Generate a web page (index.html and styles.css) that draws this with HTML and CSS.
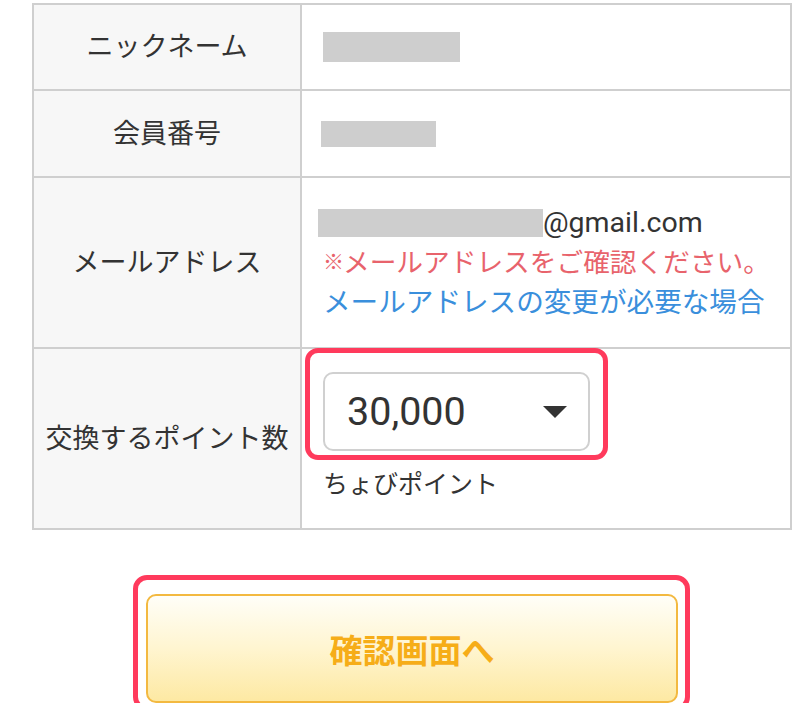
FILE: index.html
```html
<!DOCTYPE html>
<html lang="ja">
<head>
<meta charset="utf-8">
<title>ポイント交換</title>
<link rel="stylesheet" href="styles.css">
</head>
<body>
<div class="page">
  <div class="form-table">
    <div class="label">ニックネーム</div>
    <div class="value"><span class="mask mask-nick"></span></div>

    <div class="label">会員番号</div>
    <div class="value"><span class="mask mask-id"></span></div>

    <div class="label">メールアドレス</div>
    <div class="value value-col">
      <div class="line"><span class="mask mask-mail"></span><span class="latin">@gmail.com</span></div>
      <div class="line note"><span class="note-mark">※</span>メールアドレスをご確認ください。</div>
      <a class="line link" href="#">メールアドレスの変更が必要な場合</a>
    </div>

    <div class="label">交換するポイント数</div>
    <div class="value value-col">
      <div class="select-wrap">
        <div class="select">
          <span class="select-text">30,000</span>
          <svg class="caret" width="24" height="12" viewBox="0 0 24 12"><path d="M0 0H24L12 12Z" fill="#333"/></svg>
        </div>
        <span class="highlight highlight-select"></span>
      </div>
      <div class="line unit">ちょびポイント</div>
    </div>
  </div>

  <div class="actions">
    <div class="btn-wrap">
      <button class="btn" type="button">確認画面へ</button>
      <span class="highlight highlight-btn"></span>
    </div>
  </div>
</div>
</body>
</html>
```
FILE: styles.css
```css
* { box-sizing: border-box; }
html, body {
  margin: 0;
  padding: 0;
  background: #fff;
}
body {
  font-family: Roboto, "Noto Sans CJK JP", "Noto Sans", sans-serif;
  color: #333;
  font-size: 27px;
}
.page {
  padding: 3px 0 0 32px;
  width: 792px;
}
.form-table {
  display: grid;
  grid-template-columns: 266px 488px;
  grid-template-rows: 84px 85px 169px 179px;
  gap: 2px;
  padding: 2px;
  background: #cfcfcf;
  width: 760px;
}
.label {
  background: #f7f7f7;
  display: flex;
  align-items: center;
  justify-content: center;
  line-height: 40px;
  color: #333;
}
.value {
  background: #fff;
  display: flex;
  align-items: center;
  padding-left: 21px;
}
.value-col {
  flex-direction: column;
  align-items: flex-start;
  justify-content: center;
}
.line {
  line-height: 40px;
  height: 40px;
  display: flex;
  align-items: center;
  white-space: nowrap;
}
.mask {
  display: inline-block;
  background: #cecece;
}
.mask-nick { width: 137px; height: 30px; margin-left: 0; }
.mask-id { width: 115px; height: 26px; margin-left: -2px; }
.mask-mail { width: 225px; height: 28px; margin-left: -5px; }
.latin {
  font-size: 28.5px;
  color: #333;
}
.note {
  color: #e8636c;
  font-size: 26.7px;
}
.note-mark {
  font-size: 21px;
  width: 20px;
  margin-top: -2px;
}
.link {
  color: #3a8fdc;
  text-decoration: none;
  font-size: 27.6px;
}
.select-wrap {
  position: relative;
  margin-left: 0;
}
.select {
  width: 267px;
  height: 79px;
  border: 2px solid #d0d0d0;
  border-radius: 10px;
  background: #fff;
  display: flex;
  align-items: center;
  justify-content: space-between;
  padding: 0 21px 0 22px;
}
.select-text {
  font-size: 39.5px;
  color: #333;
  line-height: 1;
}
.caret { display: block; }
.unit {
  margin-top: 14px;
  font-size: 25px;
  color: #333;
}
.highlight {
  position: absolute;
  border: 5px solid #ff3a5c;
  pointer-events: none;
}
.highlight-select {
  top: -24px;
  left: -18px;
  right: -18px;
  bottom: -9px;
  border-radius: 13px;
}
.actions {
  width: 760px;
  display: flex;
  justify-content: center;
  margin-top: 64px;
}
.btn-wrap {
  position: relative;
}
.btn {
  display: block;
  width: 532px;
  height: 109px;
  border: 2px solid #f3b940;
  border-radius: 10px;
  background: linear-gradient(to bottom, #fffef8 0%, #fff5d0 50%, #fde9a3 100%);
  font-family: "Noto Sans CJK JP", sans-serif;
  font-weight: 700;
  font-size: 33px;
  color: #f6ad18;
  padding: 0;
  cursor: pointer;
}
.highlight-btn {
  top: -19px;
  left: -13px;
  right: -12px;
  bottom: -8px;
  border-radius: 14px;
}
```
